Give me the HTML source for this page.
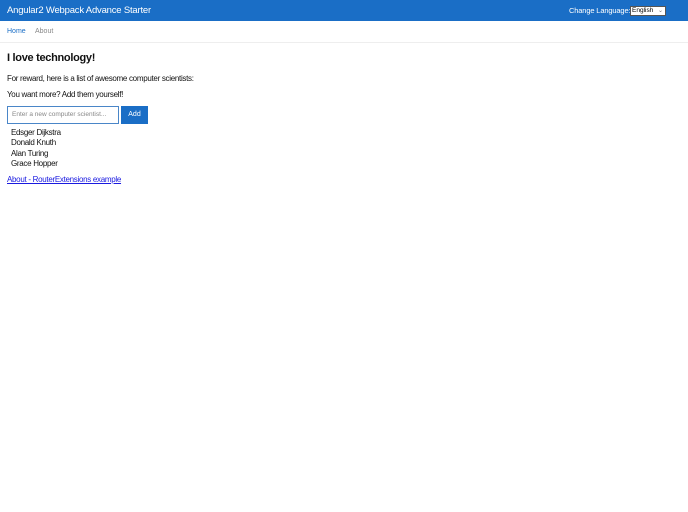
<!DOCTYPE html>
<html><head><style>
body{margin:0;width:688px;height:512px;background:#fff;font-family:"Liberation Sans",sans-serif;color:#111;position:relative;overflow:hidden}
div,a{white-space:nowrap}
.bar{position:absolute;left:0;top:0;width:688px;height:21px;background:#1a6ec6}
.title{position:absolute;left:7px;top:5px;color:#fff;font-size:9.5px;letter-spacing:-0.2px}
.lang{position:absolute;left:569px;top:6px;color:#fff;font-size:7.5px;letter-spacing:-0.15px}
.sel{position:absolute;left:630px;top:6px;width:33px;height:8px;background:#fff;border:1px solid #555;font-size:6.5px;color:#000;line-height:8px;padding-left:1px}
.sel span{position:absolute;right:2px;top:0;color:#777;font-size:6px}
.nav{position:absolute;top:21px;left:0;width:688px;height:21px;border-bottom:1px solid #eee;font-size:7px}
.nav a{position:absolute;top:7px}
h1{position:absolute;left:7px;top:52px;margin:0;font-size:11px;letter-spacing:-0.3px;font-weight:bold}
.p{position:absolute;left:7px;font-size:8px;letter-spacing:-0.3px}
.in{position:absolute;left:7px;top:106px;border:1px solid #4a86c8;font-size:6.5px;color:#888;line-height:16px;padding-left:4px;box-sizing:border-box;width:112px;height:18px;overflow:hidden}
.btn{position:absolute;left:121px;top:106px;width:27px;height:18px;background:#1a6ec6;color:#fff;font-size:7px;text-align:center;line-height:18px}
.li{position:absolute;left:11px;font-size:8px;letter-spacing:-0.3px}
.lnk{position:absolute;left:7px;top:175px;font-size:8px;letter-spacing:-0.3px;color:#1a1ae0;text-decoration:underline}
</style></head><body>
<div class="bar"><div class="title">Angular2 Webpack Advance Starter</div><div class="lang">Change Language:</div><div class="sel">English<span>⌄</span></div></div>
<div class="nav"><a style="left:7px;color:#1a6ec6">Home</a><a style="left:35px;color:#888">About</a></div>
<h1>I love technology!</h1>
<div class="p" style="top:74px">For reward, here is a list of awesome computer scientists:</div>
<div class="p" style="top:90px">You want more? Add them yourself!</div>
<div class="in">Enter a new computer scientist...</div>
<div class="btn">Add</div>
<div class="li" style="top:128px">Edsger Dijkstra</div>
<div class="li" style="top:138px">Donald Knuth</div>
<div class="li" style="top:149px">Alan Turing</div>
<div class="li" style="top:159px">Grace Hopper</div>
<div class="lnk">About - RouterExtensions example</div>
</body></html>
